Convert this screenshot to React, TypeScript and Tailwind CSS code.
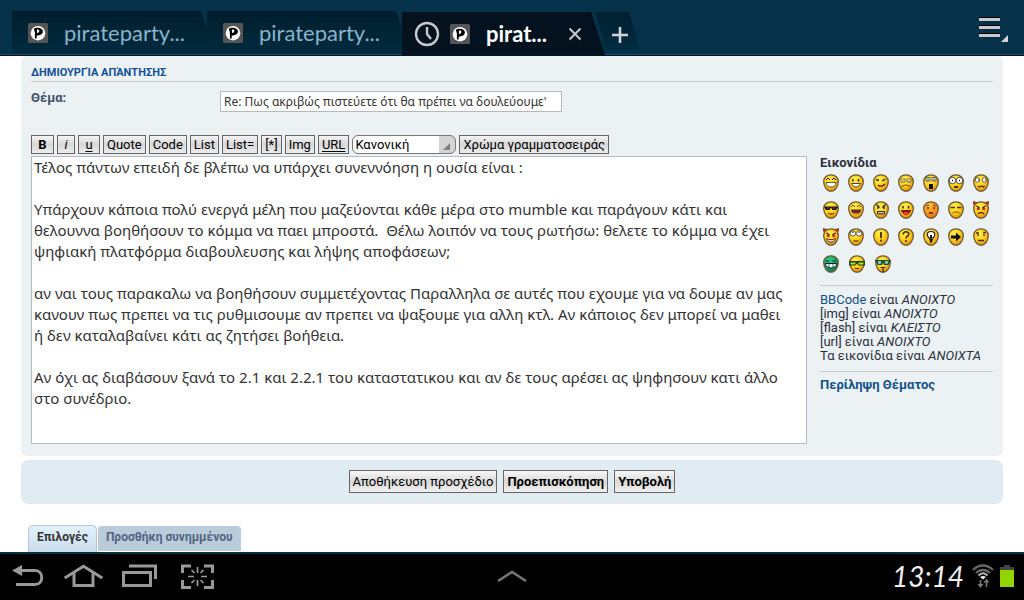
import type { ReactNode } from 'react';

const message = `Τέλος πάντων επειδή δε βλέπω να υπάρχει συνεννόηση η ουσία είναι :

Υπάρχουν κάποια πολύ ενεργά μέλη που μαζεύονται κάθε μέρα στο mumble και παράγουν κάτι και
θελουννα βοηθήσουν το κόμμα να παει μπροστά.  Θέλω λοιπόν να τους ρωτήσω: θελετε το κόμμα να έχει
ψηφιακή πλατφόρμα διαβουλευσης και λήψης αποφάσεων;

αν ναι τους παρακαλω να βοηθήσουν συμμετέχοντας Παραλληλα σε αυτές που εχουμε για να δουμε αν μας
κανουν πως πρεπει να τις ρυθμισουμε αν πρεπει να ψαξουμε για αλλη κτλ. Αν κάποιος δεν μπορεί να μαθει
ή δεν καταλαβαίνει κάτι ας ζητήσει βοήθεια.

Αν όχι ας διαβάσουν ξανά το 2.1 και 2.2.1 του καταστατικου και αν δε τους αρέσει ας ψηφησουν κατι άλλο
στο συνέδριο.`;

function Favicon() {
  return (
    <svg viewBox="0 0 20 20" className="h-5 w-5 shrink-0" aria-hidden="true">
      <rect width="20" height="20" rx="1.5" fill="#555557" />
      <circle cx="10" cy="10.2" r="7.3" fill="#fff" />
      <path d="M7.800 5v10.500" stroke="#000" strokeWidth="1.800" />
      <path d="M5.800 5.800C8 3.800 15 4.300 14.900 8.500 14.800 11.800 11 12.300 8 12.800Z" fill="#000" />
      <path d="M9 6.500c1.600-.3 2.400.2 2.300 1.600-.1 1.200-1 1.800-2.300 2Z" fill="#fff" />
    </svg>
  );
}

function Tab({ title }: { title: string }) {
  return (
    <button className="flex h-[43px] w-[195px] items-center bg-linear-to-b from-[#001e2c] to-[#002b40] pl-4 text-left [clip-path:polygon(0_0,189px_0,195px_18px,195px_100%,0_100%)]">
      <Favicon />
      <span className="ml-4 text-[22px] text-[#86b4cc]">{title}</span>
    </button>
  );
}

type Face = { name: string; tone?: string; art: ReactNode };

const dots = <path d="M5 5v2.5M10.5 5v2.5" stroke="#222" strokeWidth="1.4" />;
const redEyes = (
  <>
    <path d="M1 4 0 .5 4 1.5M15 4l1-3.500-4 1" fill="#e33510" stroke="#712010" strokeWidth=".7" />
    <path d="m3.500 5 3 2M12.500 5l-3 2" stroke="#300" strokeWidth="1.200" />
    <path d="M4 8h2.500M9.500 8H12" stroke="#e01010" strokeWidth="2" />
  </>
);

const rows: Face[][] = [
  [
    { name: 'Πολύ χαρούμενος', art: <><path d="m3 6 2-2 2 2M9 6l2-2 2 2" fill="none" stroke="#222" /><path d="M3 8.500h10c0 6-10 6-10 0Z" fill="#fff" stroke="#333" strokeWidth=".8" /></> },
    { name: 'Χαμόγελο', art: <>{dots}<path d="M3.500 9.500h9c-1 4.500-8 4.500-9 0Z" fill="#fff" stroke="#333" strokeWidth=".9" /></> },
    { name: 'Κλείσιμο ματιού', art: <><path d="M3 6h3M9 7l3.500-2" stroke="#222" strokeWidth="1.300" /><path d="M5 11c2 2 5 1 7-1" fill="none" stroke="#522" strokeWidth="1.300" /></> },
    { name: 'Λυπημένος', art: <><path d="M3 5h4v3H3ZM9 5h4v3H9Z" fill="#fff" stroke="#665510" strokeWidth=".8" /><path d="M4.500 7h1M10.500 7h1" stroke="#222" /><path d="M4 12.500c2-2 6-2 8 0" fill="none" stroke="#652" strokeWidth="1.200" /></> },
    { name: 'Έκπληκτος', art: <><path d="M3 3.500h4V7H3ZM9 3.500h4V7H9Z" fill="#fff" stroke="#443" strokeWidth=".8" /><path d="M5 4.500v2M11 4.500v2" stroke="#222" /><path d="M6 10h4v5H6Z" fill="#111" /></> },
    { name: 'Σοκαρισμένος', art: <><circle cx="4.500" cy="6.500" r="3.200" fill="#fff" stroke="#222" strokeWidth=".8" /><circle cx="11.500" cy="6.500" r="3.200" fill="#fff" stroke="#222" strokeWidth=".8" /><path d="M4 6.500h1M11 6.500h1M6 13h4" stroke="#111" strokeWidth="1.300" /></> },
    { name: 'Μπερδεμένος', art: <><circle cx="4.500" cy="6" r="2.300" fill="#fff" stroke="#443" strokeWidth=".8" /><circle cx="11.500" cy="6" r="2.300" fill="#fff" stroke="#443" strokeWidth=".8" /><path d="M5 6h1M12 6h1M5 12l1.500 1 2-1.200 2 1.200 1-1" fill="none" stroke="#421" strokeWidth="1.100" /></> },
  ],
  [
    { name: 'Άνετος', art: <><path d="M1 5.500h14L13 9H9.500L8 6.500 6.500 9H3Z" fill="#111" /><path d="M4 7h2M10 7h2" stroke="#886820" /><path d="M5 12c2 1.500 4 1.500 6 0" fill="none" stroke="#421" /></> },
    { name: 'Γέλιο', art: <><path d="m3 6 2-2 2 2M9 6l2-2 2 2" fill="none" stroke="#665010" /><path d="M3 8.500h10c0 6-10 6-10 0Z" fill="#55302a" /><path d="M5 12c2-1 4-1 6 0l-3 1.500Z" fill="#d34a30" /></> },
    { name: 'Τρελός', art: <><path d="m3.500 3.500 3 3M12.500 3.500l-3 3M5 5v3M11 5v3" stroke="#222" strokeWidth="1.300" /><path d="M4.500 13v-2.500h7V13Z" fill="#bbb" stroke="#333" /></> },
    { name: 'Γλώσσα έξω', art: <>{dots}<path d="M3 9h10c0 2-1 2.500-2 3-1 3-5 3-6 0-1-.5-2-1-2-3Z" fill="#831812" /><path d="M6 11h4v2c-1 1.500-3 1.500-4 0Z" fill="#f33c24" /></> },
    { name: 'Ντροπαλός', tone: 'url(#blush)', art: <><path d="m3 5 3-1M13 5l-3-1" stroke="#833" /><path d="M5 6v2M11 6v2M6 12h4" stroke="#422" strokeWidth="1.400" /></> },
    { name: 'Δυσαρεστημένος', art: <><path d="M2.500 6.500h4.500M9 6.500h4.500" stroke="#443810" strokeWidth="1.400" /><path d="M4.500 12c2-1.500 5-1.500 7 0" fill="none" stroke="#765010" /></> },
    { name: 'Κακός', art: <>{redEyes}<path d="M5 13c1.500-2 4.500-2 6 0" fill="none" stroke="#622" strokeWidth="1.300" /></> },
  ],
  [
    { name: 'Μοχθηρός', art: <>{redEyes}<path d="M3.500 10.500c3 1.500 6 1.500 9 0-1 5-8 5-9 0Z" fill="#ddd" stroke="#422" strokeWidth=".9" /></> },
    { name: 'Γυρίζει τα μάτια', art: <><circle cx="5" cy="5.500" r="2.600" fill="#fff" stroke="#333" strokeWidth=".8" /><circle cx="11" cy="5.500" r="2.600" fill="#fff" stroke="#333" strokeWidth=".8" /><path d="M4.500 4.500h1M10.500 4.500h1M5.500 13h5" stroke="#222" strokeWidth="1.200" /></> },
    { name: 'Θαυμαστικό', art: <path d="M8 4v6M8 11.500v2" stroke="#3b2b08" strokeWidth="1.800" /> },
    { name: 'Ερώτηση', art: <path d="M5.200 6.500c0-3.500 5.600-3.500 5.600-.5 0 2-2.800 2.300-2.800 4.500M8 12v2" fill="none" stroke="#3b2b08" strokeWidth="1.500" /> },
    { name: 'Ιδέα', art: <><path d="M8 3.500c5 0 4.500 4.500 2 6.500H6C3.500 8 3 3.500 8 3.500Z" fill="#fff" stroke="#111" strokeWidth="1.100" /><path d="M8 7v3M6.200 11.500h3.600M7 13.500h2" stroke="#111" strokeWidth="1.800" /></> },
    { name: 'Βέλος', art: <path d="M3 7.500h5V4.500L13 9l-5 4.500v-3H3Z" fill="#111" /> },
    { name: 'Ουδέτερος', art: <><path d="M3 5h3M10 4.500h3M5 6v2M11 6v2M5 12.500h6" stroke="#443010" strokeWidth="1.300" /></> },
  ],
  [
    { name: 'Πράσινος', tone: 'url(#green)', art: <><path d="M3 6h3.500M9.500 6H13" stroke="#033" /><path d="M2.500 8.500h11c0 6-11 6-11 0Z" fill="#fff" stroke="#022" /><path d="M6 9v4M10 9v4" stroke="#145" strokeWidth=".8" /></> },
    { name: 'Σπασίκλας', art: <><path d="M0 6h16v4.500H9.500L8 8.500l-1.500 2H0Z" fill="#283c10" /><path d="M1.500 7.500h5v2h-5ZM9.500 7.500h5v2h-5Z" fill="#9bea32" /><path d="M6 13.500h4" stroke="#522" /></> },
    { name: 'Φαν', art: <><path d="M0 5h16l-2.500 5H9L8 7.500 7 10H2.500Z" fill="#174c38" /><path d="M2.500 6h4L5.500 9H3.500ZM9.500 6h4l-1 3h-2Z" fill="#7ad0a4" /><path d="M5.500 12.500h5M8 13v4.500" stroke="#421" strokeWidth="1.200" /></> },
  ],
];

function Smiley({ face }: { face: Face }) {
  return (
    <button aria-label={face.name} className="block h-[18px] w-4">
      <svg viewBox="0 0 16 18" className="h-[18px] w-4">
        <path
          d="M8 .8C12.300.8 15.300 3.500 15.300 7.500 15.300 12 12.200 17.200 8 17.200S.7 12 .7 7.500C.7 3.500 3.700.8 8 .8Z"
          fill={face.tone ?? 'url(#yellow)'}
          stroke="#6d5a32"
          strokeWidth="1.3"
        />
        {face.art}
      </svg>
    </button>
  );
}

const toolButton =
  'h-[19px] border border-[#666] bg-linear-to-b from-[#f4f4f4] via-[#d8d8d8] to-[#ededed] px-[3px] text-[13px] leading-4 text-black whitespace-nowrap';

const tools: { label: string; style?: string }[] = [
  { label: 'B', style: 'font-bold w-[23px]' },
  { label: 'i', style: 'italic w-[18px]' },
  { label: 'u', style: 'underline w-[22px] underline-offset-2' },
  { label: 'Quote' },
  { label: 'Code' },
  { label: 'List' },
  { label: 'List=' },
  { label: '[*]' },
  { label: 'Img' },
  { label: 'URL', style: 'underline underline-offset-2' },
];

const bigButton =
  'h-[23px] border border-[#666] bg-linear-to-b from-[#f8f8f8] via-[#d9d9d9] to-[#f0f0f0] px-[3px] text-[13px] leading-5 text-black';

const statuses = [
  ['[img] είναι', 'ΑΝΟΙΧΤΟ'],
  ['[flash] είναι', 'ΚΛΕΙΣΤΟ'],
  ['[url] είναι', 'ΑΝΟΙΧΤΟ'],
  ['Τα εικονίδια είναι', 'ΑΝΟΙΧΤΑ'],
];

export default function App() {
  return (
    <div className="flex min-h-screen flex-col bg-white font-[Roboto,'Noto_Sans',sans-serif]">
      <svg className="absolute h-0 w-0" aria-hidden="true">
        <defs>
          <radialGradient id="yellow" cx=".4" cy=".3" r=".8">
            <stop offset="0" stopColor="#fff04a" />
            <stop offset=".5" stopColor="#ffcd1c" />
            <stop offset="1" stopColor="#e07c00" />
          </radialGradient>
          <radialGradient id="blush" cx=".4" cy=".2" r=".9">
            <stop offset="0" stopColor="#ffc02c" />
            <stop offset="1" stopColor="#f06a10" />
          </radialGradient>
          <radialGradient id="green" cx=".4" cy=".3" r=".8">
            <stop offset="0" stopColor="#2bd48a" />
            <stop offset="1" stopColor="#047048" />
          </radialGradient>
        </defs>
      </svg>

      <header className="flex h-14 items-end border-b border-[#001525] bg-[#05324a] font-[Lato,sans-serif]">
        <div className="flex h-full flex-1 items-end border-b border-[#1c4868] pl-3">
          <Tab title="pirateparty..." />
          <Tab title="pirateparty..." />
          <div className="-mb-px flex h-[43px] w-[203px] items-center bg-[#03121e] pl-3 [clip-path:polygon(0_0,189px_0,203px_100%,0_100%)]">
            <svg viewBox="0 0 26 26" className="h-[26px] w-[26px]" fill="none" stroke="#c9c9cb" strokeWidth="2.4" aria-hidden="true">
              <circle cx="13" cy="13" r="11" />
              <path d="M13 6v7l4 5" />
            </svg>
            <span className="ml-2.5"><Favicon /></span>
            <span className="ml-4 w-[82px] text-[22px] font-bold text-white">pirat...</span>
            <button aria-label="Κλείσιμο καρτέλας">
              <svg viewBox="0 0 14 14" className="h-3.5 w-3.5" stroke="#c9c9cb" strokeWidth="2" aria-hidden="true">
                <path d="m1.500 1.500 11 11M12.500 1.500l-11 11" />
              </svg>
            </button>
          </div>
          <button aria-label="Νέα καρτέλα" className="-ml-2.5 mb-1 flex h-[38px] w-[45px] items-center justify-center bg-linear-to-b from-[#00202f] to-[#002b40] pt-2 pl-1 [clip-path:polygon(0_0,34px_0,100%_100%,11px_100%)]">
            <svg viewBox="0 0 18 18" className="h-[18px] w-[18px]" stroke="#d0d4d8" strokeWidth="2.600" aria-hidden="true">
              <path d="M9 1v16M1 9h16" />
            </svg>
          </button>
          <button aria-label="Μενού" className="mr-[15px] mb-[11px] ml-auto">
            <svg viewBox="0 0 30 26" className="h-[26px] w-[30px]" aria-hidden="true">
              <path d="M0 .5h21M0 8.500h21M0 16.500h21" stroke="#000" />
              <path d="M0 2.500h21M0 10.500h21M0 18.500h21" stroke="#c9c9c9" strokeWidth="3" />
              <path d="M22 25h7v-7Z" fill="#d5d5d0" />
            </svg>
          </button>
        </div>
      </header>

      <main className="flex-1 px-[21px]">
        <section className="rounded-[7px] bg-[#ecf1f3] px-2.5 pt-[9px] pb-3">
          <h1 className="border-b border-[#ccc] text-[11px] leading-4 font-bold text-[#115098]">ΔΗΜΙΟΥΡΓΊΑ ΑΠΆΝΤΗΣΗΣ</h1>
          <div className="flex pt-[9px]">
            <label htmlFor="subject" className="w-[189px] text-[13px] leading-[14px] font-bold text-[#425067]">Θέμα:</label>
            <input
              id="subject"
              className="h-[21px] w-[342px] border border-[#b4bac0] bg-white pl-[3px] font-['Noto_Sans',sans-serif] text-[12px] text-[#333]"
              defaultValue="Re: Πως ακριβώς πιστεύετε ότι θα πρέπει να δουλεύουμε'"
            />
          </div>
          <div className="mt-[23px] flex gap-[3px]">
            {tools.map((t) => (
              <button key={t.label} className={`${toolButton} ${t.style ?? ''}`}>{t.label}</button>
            ))}
            <div className="relative">
              <select aria-label="Μέγεθος γραμματοσειράς" className="block h-[19px] w-[104px] appearance-none rounded-[6px] border border-[#777] bg-linear-to-r from-white from-84% to-[#d5d5d5] to-84% pl-0.5 text-[13px] leading-4 text-black">
                <option>Κανονική</option>
              </select>
              <svg viewBox="0 0 7 7" className="pointer-events-none absolute right-1.5 bottom-1 h-[7px] w-[7px]" aria-hidden="true">
                <path d="M0 7h7V0Z" fill="#808080" />
              </svg>
            </div>
            <button className={toolButton}>Χρώμα γραμματοσειράς</button>
          </div>
          <div className="mt-0.5 flex gap-[13px]">
            <textarea
              aria-label="Μήνυμα"
              wrap="off"
              className="block h-72 min-w-0 flex-1 resize-none overflow-hidden border border-[#b4bac8] bg-white px-[2px] font-['Noto_Sans',sans-serif] text-[15px] leading-[21px] text-[#333]"
              defaultValue={message}
            />
            <aside className="w-[173px] text-[13px] leading-[14px] text-[#29303c]">
              <h2 className="font-bold">Εικονίδια</h2>
              <div className="flex flex-col gap-[9px] border-b border-[#ccc] pt-1 pb-3 pl-[3px]">
                {rows.map((row, i) => (
                  <div key={i} className={i === 3 ? 'flex gap-2.5' : 'flex gap-[9px]'}>
                    {row.map((face) => <Smiley key={face.name} face={face} />)}
                  </div>
                ))}
              </div>
              <div className="border-b border-[#ccc] pt-[7px] pb-2">
                <p><a href="#bbcode" className="text-[#105289]">BBCode</a> είναι <em>ΑΝΟΙΧΤΟ</em></p>
                {statuses.map(([what, state]) => (
                  <p key={what}>{what} <em>{state}</em></p>
                ))}
              </div>
              <a href="#review" className="mt-1.5 block font-bold text-[#105289]">Περίληψη Θέματος</a>
            </aside>
          </div>
        </section>

        <section className="mt-1 flex justify-center gap-1.5 rounded-[7px] bg-[#e1ebf2] pt-2.5 pb-[11px]">
          <button className={bigButton}>Αποθήκευση προσχέδιο</button>
          <button className={`${bigButton} font-bold`}>Προεπισκόπηση</button>
          <button className={`${bigButton} font-bold`}>Υποβολή</button>
        </section>

        <nav className="mt-[21px] flex items-start gap-px pl-[7px] text-[12px] font-bold">
          <a href="#options" className="h-[27px] rounded-t-[5px] border border-b-0 border-[#b9c4d0] bg-linear-to-b from-[#e2f2ff] to-[#cadceb] px-2 pt-[3px] leading-4 text-[#333]">Επιλογές</a>
          <a href="#attachment" className="mt-px h-[25px] rounded-t-[4px] bg-[#bacbd9] px-2 pt-[3px] leading-4 text-[#536482]">Προσθήκη συνημμένου</a>
        </nav>
      </main>

      <footer className="grid h-12 grid-cols-3 items-center border-t-2 border-[#06303f] bg-black pb-0.5">
        <div className="flex items-center gap-5 pl-3">
          <button aria-label="Πίσω">
            <svg viewBox="0 0 32 24" className="h-6 w-8" fill="none" aria-hidden="true">
              <path d="M8 6.500h15c9 0 9 14 0 14H4" stroke="#999" strokeWidth="3" />
              <path d="M0 6.500 10 1v11Z" fill="#999" />
            </svg>
          </button>
          <button aria-label="Αρχική">
            <svg viewBox="0 0 39 24" className="h-6 w-[39px]" fill="none" stroke="#999" strokeWidth="3" aria-hidden="true">
              <path d="M.7 14 19.500 2.200 38.300 14M10 9v12.500h19V9" />
            </svg>
          </button>
          <button aria-label="Πρόσφατες εφαρμογές" className="-ml-px">
            <svg viewBox="0 0 35 24" className="h-6 w-[35px]" fill="none" stroke="#999" strokeWidth="3" aria-hidden="true">
              <path d="M1.500 8.500h27v13h-27ZM7 2h26.500v13" />
            </svg>
          </button>
          <button aria-label="Στιγμιότυπο οθόνης" className="ml-1">
            <svg viewBox="0 0 33 25" className="h-[25px] w-[33px]" fill="none" stroke="#999" aria-hidden="true">
              <path d="M1.500 9V2H10M23 2h8.500v7M31.500 16v7.500H23M10 23.500H1.500V16" strokeWidth="3" />
              <path d="M16.500 3v6M16.500 16v6M7 12.500h6M20 12.500h6M10.500 6l3 3M22.500 6l-3 3M10.500 19l3-3M22.500 19l-3-3" strokeWidth="1.700" />
            </svg>
          </button>
        </div>
        <button aria-label="Γρήγορες εφαρμογές" className="justify-self-center">
          <svg viewBox="0 0 30 12" className="h-3 w-[30px]" fill="none" stroke="#777" strokeWidth="2.500" aria-hidden="true">
            <path d="M1 11 15 2l14 9" />
          </svg>
        </button>
        <div className="flex items-center justify-end pr-2.5">
          <time className="font-[Lato,sans-serif] text-[28px] leading-8 text-[#eee] italic">13:14</time>
          <svg viewBox="0 0 22 25" className="ml-2 h-[25px] w-[22px]" fill="none" aria-hidden="true">
            <path d="M1 6c6-6 14-6 20 0M4 9c4-4 10-4 14 0" stroke="#666" strokeWidth="2.300" />
            <path d="M6.500 11.500c3-3 6-3 9 0" stroke="#bbb" strokeWidth="2" />
            <path d="M8 13c2-1.500 4-1.500 6 0l-3 2.500Z" fill="#eee" />
            <path d="M8.500 16v6M14.500 23v-6" stroke="#777" strokeWidth="1.600" />
            <path d="M5.500 20h6l-3 4ZM11.500 18.500h6l-3-4Z" fill="#777" />
          </svg>
          <svg viewBox="0 0 14 22" className="ml-1.5 h-[22px] w-3.5" aria-hidden="true">
            <path d="M4 0h6v2h4v3H0V2h4Z" fill="#444" />
            <path d="M0 5h14v17H0Z" fill="#92d400" />
          </svg>
        </div>
      </footer>
    </div>
  );
}
